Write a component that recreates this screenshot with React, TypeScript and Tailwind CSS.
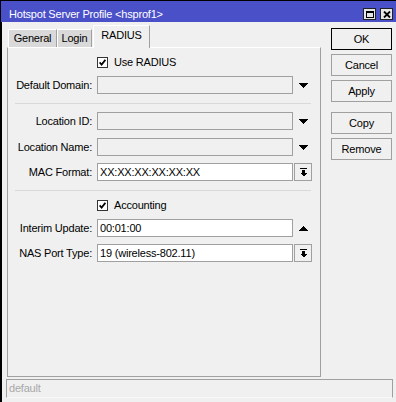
import React from "react";

function DownTri() {
  return (
    <svg width="9" height="5" viewBox="0 0 9 5" shapeRendering="crispEdges">
      <polygon points="0,0 9,0 4.5,5" fill="#000" />
    </svg>
  );
}

function UpTri() {
  return (
    <svg width="9" height="5" viewBox="0 0 9 5" shapeRendering="crispEdges">
      <polygon points="0,5 9,5 4.5,0" fill="#000" />
    </svg>
  );
}

function DropBtn() {
  return (
    <div className="w-[18px] h-[18px] border border-[#a0a0a0] bg-[#f0f0f0] flex items-center justify-center">
      <svg width="7" height="9" viewBox="0 0 7 9" shapeRendering="crispEdges">
        <rect x="0" y="0" width="7" height="1" fill="#000" />
        <rect x="2" y="2" width="3" height="3" fill="#000" />
        <polygon points="0,5 7,5 3.5,8.5" fill="#000" />
      </svg>
    </div>
  );
}

function Field({
  label,
  value,
  disabled,
  slot,
  className,
}: {
  label: string;
  value?: string;
  disabled?: boolean;
  slot?: React.ReactNode;
  className?: string;
}) {
  return (
    <div className={"flex items-center h-[18px] " + (className ?? "")}>
      <div className="w-[84px] text-right whitespace-nowrap">{label}</div>
      <div
        className={
          "ml-[5px] w-[196px] h-[18px] border border-[#a0a0a0] pl-[2px] flex items-center whitespace-nowrap " +
          (disabled ? "bg-[#f0f0f0]" : "bg-white")
        }
      >
        {value}
      </div>
      <div className="ml-[1px] w-[18px] h-[18px] flex items-center justify-center">{slot}</div>
    </div>
  );
}

function Check({ label, className }: { label: string; className?: string }) {
  return (
    <div className={"flex items-center h-[18px] " + (className ?? "")}>
      <div className="w-[84px]" />
      <div className="ml-[5px] w-[11px] h-[11px] border border-[#333333] bg-white flex items-center justify-center">
        <svg width="7" height="7" viewBox="0 0 7 7">
          <path d="M0.6 3.4 L2.6 5.6 L6.4 0.8" stroke="#000" strokeWidth="1.7" fill="none" />
        </svg>
      </div>
      <span className="ml-[6px]">{label}</span>
    </div>
  );
}

function Sep({ className }: { className?: string }) {
  return <div className={"ml-[7px] w-[296px] h-px bg-[#d9d9d9] " + (className ?? "")} />;
}

function Btn({ label, def, className }: { label: string; def?: boolean; className?: string }) {
  return (
    <div
      className={
        "h-[22px] w-[61px] flex items-center justify-center bg-[#f0f0f0] border " +
        (def ? "border-black" : "border-[#a0a0a0]") +
        " " +
        (className ?? "")
      }
    >
      {label}
    </div>
  );
}

export default function App() {
  return (
    <div className="w-[396px] h-[402px] bg-[#f0f0f0] border-t border-l border-black flex flex-col overflow-hidden font-['Liberation_Sans',Arial,sans-serif] text-[11px] leading-[13px] tracking-[-0.2px] text-black">
      {/* Title bar */}
      <div className="h-[21px] shrink-0 bg-[#4a50c8] flex items-start justify-between pt-[7px] pl-[8px] pr-[3px] text-white">
        <span className="whitespace-nowrap">Hotspot Server Profile &lt;hsprof1&gt;</span>
        <div className="flex gap-[4px]">
          <div className="w-[13px] h-[12px] border border-[#222] bg-[#e6e6e6] flex items-center justify-center">
            <svg width="8" height="7" viewBox="0 0 8 7" shapeRendering="crispEdges">
              <rect x="0.5" y="0.5" width="7" height="6" fill="none" stroke="#000" strokeWidth="1" />
              <rect x="0" y="0" width="8" height="2" fill="#000" />
            </svg>
          </div>
          <div className="w-[13px] h-[12px] border border-[#222] bg-[#e6e6e6] flex items-center justify-center">
            <svg width="8" height="7" viewBox="0 0 8 7">
              <path d="M1 0.5 L7 6.5 M7 0.5 L1 6.5" stroke="#000" strokeWidth="1.8" fill="none" />
            </svg>
          </div>
        </div>
      </div>

      {/* Body */}
      <div className="flex-1 flex flex-col border-l border-black">
        <div className="flex">
          <div className="ml-[5px] flex flex-col">
            {/* Tabs */}
            <div className="h-[25px] flex items-end">
              <div className="ml-[1px] w-[49px] h-[18px] bg-[#d9d9d9] border-t border-l border-r border-t-white border-l-white border-r-[#a0a0a0] pt-[2px] text-center">
                General
              </div>
              <div className="w-[35px] h-[18px] bg-[#d9d9d9] border-t border-l border-r border-t-white border-l-white border-r-[#a0a0a0] pt-[2px] text-center">
                Login
              </div>
              <div className="relative z-10 ml-[1px] -mb-px w-[57px] h-[23px] bg-[#f0f0f0] border-t border-l border-r border-t-white border-l-white border-r-[#a0a0a0] pt-[3px] text-center">
                RADIUS
              </div>
            </div>
            {/* Panel */}
            <div className="w-[314px] h-[330px] border border-[#a0a0a0] border-t-white bg-[#f0f0f0] flex flex-col pt-[5px]">
              <Check label="Use RADIUS" />
              <Field className="mt-[5px]" label="Default Domain:" disabled slot={<DownTri />} />
              <Sep className="mt-[9px]" />
              <Field className="mt-[8px]" label="Location ID:" disabled slot={<DownTri />} />
              <Field className="mt-[8px]" label="Location Name:" disabled slot={<DownTri />} />
              <Field className="mt-[7px]" label="MAC Format:" value="XX:XX:XX:XX:XX:XX" slot={<DropBtn />} />
              <Sep className="mt-[9px]" />
              <Check className="mt-[5px]" label="Accounting" />
              <Field className="mt-[5px]" label="Interim Update:" value="00:01:00" slot={<UpTri />} />
              <Field className="mt-[7px]" label="NAS Port Type:" value="19 (wireless-802.11)" slot={<DropBtn />} />
            </div>
          </div>
          {/* Buttons */}
          <div className="ml-[10px] mt-[6px] flex flex-col">
            <Btn label="OK" def />
            <Btn label="Cancel" className="mt-[4px]" />
            <Btn label="Apply" className="mt-[4px]" />
            <Btn label="Copy" className="mt-[10px]" />
            <Btn label="Remove" className="mt-[4px]" />
          </div>
        </div>
        {/* Status bar */}
        <div className="mt-[2px] ml-[4px] w-[387px] h-[19px] border border-[#a0a0a0] border-b-[#f8f8f8] pl-[2px] flex items-center text-[#a8a8a8]">
          default
        </div>
      </div>
    </div>
  );
}
